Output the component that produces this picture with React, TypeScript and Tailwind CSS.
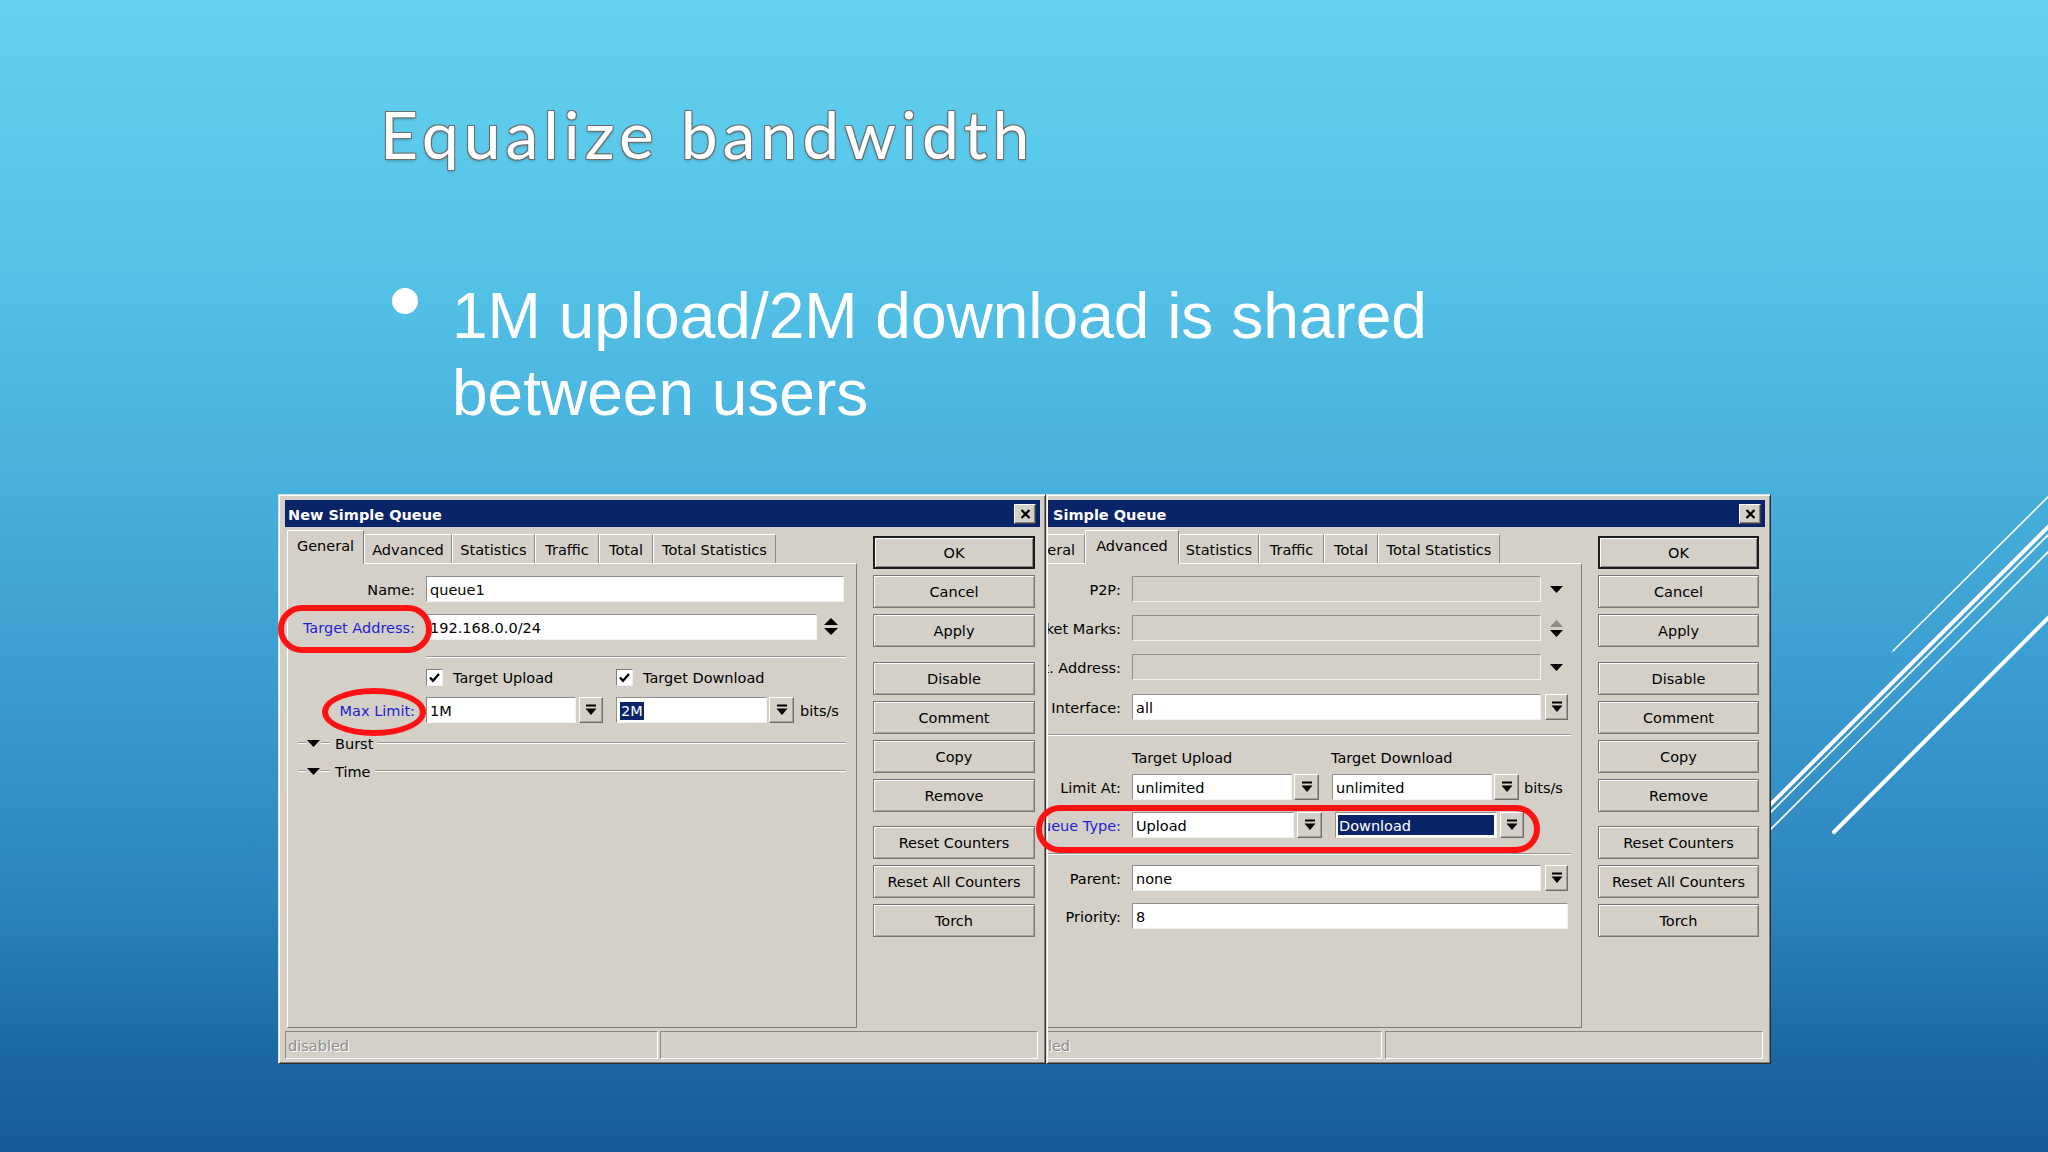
import React from 'react';

const ui = "font-['DejaVu_Sans',sans-serif] text-[14.5px] leading-none text-black";
const etched = 'h-0 border-t border-t-[#9a9894] border-b border-b-white';

function DropGlyph() {
  return (
    <svg width="12" height="13" viewBox="0 0 12 13">
      <rect x="1" y="0.5" width="10" height="2" fill="#000" />
      <path d="M0.5 4.5h11L6 11z" fill="#000" />
    </svg>
  );
}

function DropBtn({ className = '' }: { className?: string }) {
  return (
    <div
      className={`h-[26px] shrink-0 flex items-center justify-center bg-[#d4d0c8] border border-t-white border-l-white border-b-[#6c6c6c] border-r-[#6c6c6c] shadow-[inset_-1px_-1px_0_#a6a39d] ${className}`}
    >
      <DropGlyph />
    </div>
  );
}

function Field({ className = '', grey = false, children }: { className?: string; grey?: boolean; children?: React.ReactNode }) {
  return (
    <div
      className={`h-[26px] shrink-0 flex items-center pl-[3px] pt-[2px] overflow-hidden whitespace-nowrap border border-t-[#8e8e8e] border-l-[#8e8e8e] border-b-[#f4f3f0] border-r-[#f4f3f0] ${grey ? 'bg-[#d4d0c8]' : 'bg-white'} ${className}`}
    >
      {children}
    </div>
  );
}

function SelField({ className = '', children }: { className?: string; children: React.ReactNode }) {
  return (
    <div
      className={`h-[26px] shrink-0 flex p-[2px] bg-white border border-t-[#8e8e8e] border-l-[#8e8e8e] border-b-[#f4f3f0] border-r-[#f4f3f0] ${className}`}
    >
      <div className="flex-1 flex items-center pl-[1px] pt-[2px] bg-[#0a246a] text-white">{children}</div>
    </div>
  );
}

function Arrow({ up = false, color = '#000' }: { up?: boolean; color?: string }) {
  return (
    <svg width="13" height="7" viewBox="0 0 13 7">
      <path d={up ? 'M0 7h13L6.5 0z' : 'M0 0h13L6.5 7z'} fill={color} />
    </svg>
  );
}

function Check() {
  return (
    <div className="w-[17px] h-[17px] shrink-0 bg-white border border-t-[#808080] border-l-[#808080] border-b-[#eeeeee] border-r-[#eeeeee] flex items-center justify-center">
      <svg width="11" height="10" viewBox="0 0 11 10">
        <path d="M1 4.5l3 3.2L10 1" fill="none" stroke="#000" strokeWidth="2.3" />
      </svg>
    </div>
  );
}

function Row({
  label,
  blue = false,
  lw,
  mt,
  children,
}: {
  label: string;
  blue?: boolean;
  lw: string;
  mt: string;
  children: React.ReactNode;
}) {
  return (
    <div className={`flex items-center h-[26px] ${mt}`}>
      <div className={`${lw} shrink-0 flex justify-end whitespace-nowrap pt-[2px] ${blue ? 'text-[#1e1ed6]' : ''}`}>
        <span className="shrink-0">{label}</span>
      </div>
      <div className="w-[11px] shrink-0" />
      {children}
    </div>
  );
}

function Group({ label, mt }: { label: string; mt: string }) {
  return (
    <div className={`flex items-center h-[16px] ml-[10px] mr-[10px] ${mt}`}>
      <div className={`w-[8px] ${etched}`} />
      <div className="ml-[1px]">
        <Arrow />
      </div>
      <div className={`w-[9px] ml-[1px] ${etched}`} />
      <span className="ml-[5px] pt-[2px]">{label}</span>
      <div className={`flex-1 ml-[4px] ${etched}`} />
    </div>
  );
}

function Btn({ label, def = false, mt = '' }: { label: string; def?: boolean; mt?: string }) {
  return (
    <div
      className={`h-[33px] shrink-0 flex items-center justify-center pt-[2px] bg-[#d4d0c8] ${mt} ${
        def
          ? 'border-2 border-[#1c1c1c] shadow-[inset_1px_1px_0_#ffffff,inset_-1px_-1px_0_#8a8a8a]'
          : 'border border-[#767676] shadow-[inset_1px_1px_0_#ffffff,inset_-1px_-1px_0_#a5a29c]'
      }`}
    >
      {label}
    </div>
  );
}

function Buttons({ className }: { className: string }) {
  return (
    <div className={`flex flex-col gap-[6px] pt-[9px] ${className}`}>
      <Btn label="OK" def />
      <Btn label="Cancel" />
      <Btn label="Apply" />
      <Btn label="Disable" mt="mt-[9px]" />
      <Btn label="Comment" />
      <Btn label="Copy" />
      <Btn label="Remove" />
      <Btn label="Reset Counters" mt="mt-[8px]" />
      <Btn label="Reset All Counters" />
      <Btn label="Torch" />
    </div>
  );
}

function TitleBar({ title, pl }: { title: string; pl: string }) {
  return (
    <div className={`h-[27px] shrink-0 bg-[#0a246a] flex items-center justify-between pr-[4px] ${pl}`}>
      <span className="pt-[3px] font-['DejaVu_Sans',sans-serif] font-bold text-[14.5px] leading-none text-white">{title}</span>
      <div className="w-[22px] h-[20px] bg-[#d4d0c8] flex items-center justify-center border border-t-white border-l-white border-b-[#404040] border-r-[#404040] shadow-[inset_-1px_-1px_0_#808080]">
        <svg width="11" height="10" viewBox="0 0 11 10">
          <path d="M1.5 1l8 8M9.5 1l-8 8" stroke="#000" strokeWidth="2.3" />
        </svg>
      </div>
    </div>
  );
}

type TabDef = { label: string; w: string; active?: boolean };

function Tabs({ tabs }: { tabs: TabDef[] }) {
  return (
    <div className="flex items-end h-[33px]">
      {tabs.map((t) =>
        t.active ? (
          <div
            key={t.label}
            className={`${t.w} shrink-0 h-[34px] -mb-px relative z-10 bg-[#d4d0c8] border-t border-l border-white border-r border-r-[#7a7a7a] flex justify-center pt-[8px] whitespace-nowrap`}
          >
            {t.label}
          </div>
        ) : (
          <div
            key={t.label}
            className={`${t.w} shrink-0 h-[29px] bg-[#d4d0c8] border-t border-l border-white border-r border-r-[#8a8a8a] flex justify-center pt-[8px] whitespace-nowrap`}
          >
            {t.label}
          </div>
        )
      )}
    </div>
  );
}

function Panel({ children }: { children: React.ReactNode }) {
  return (
    <div className="h-[465px] flex flex-col border border-t-white border-l-white border-r-[#7c7c7c] border-b-[#7c7c7c]">
      {children}
    </div>
  );
}

function StatusCell({ className, children }: { className: string; children?: React.ReactNode }) {
  return (
    <div
      className={`h-[28px] shrink-0 flex items-center pl-[2px] pt-[2px] whitespace-nowrap text-[#8c8c8c] [text-shadow:1px_1px_0_#ffffff] border border-t-[#8a8a8a] border-l-[#8a8a8a] border-b-white border-r-white ${className}`}
    >
      {children}
    </div>
  );
}

const frame =
  'relative shrink-0 h-[570px] bg-[#d4d0c8] border border-t-[#e2dfd8] border-l-[#e2dfd8] border-r-[#2c2c2c] border-b-[#2c2c2c] shadow-[inset_1px_1px_0_#ffffff,inset_-1px_-1px_0_#808080] pt-[5px] pb-[4px] flex flex-col';

function LeftDialog() {
  return (
    <div className={`${frame} w-[768px] pl-[6px] pr-[5px] ${ui}`}>
      <TitleBar title="New Simple Queue" pl="pl-[3px]" />
      <div className="flex">
        <div className="ml-[2px] w-[570px] shrink-0 flex flex-col pt-[3px]">
          <Tabs
            tabs={[
              { label: 'General', w: 'w-[77px]', active: true },
              { label: 'Advanced', w: 'w-[88px]' },
              { label: 'Statistics', w: 'w-[83px]' },
              { label: 'Traffic', w: 'w-[64px]' },
              { label: 'Total', w: 'w-[54px]' },
              { label: 'Total Statistics', w: 'w-[123px]' },
            ]}
          />
          <Panel>
            <Row label="Name:" lw="w-[127px]" mt="mt-[12px]">
              <Field className="w-[418px]">queue1</Field>
            </Row>
            <Row label="Target Address:" blue lw="w-[127px]" mt="mt-[12px]">
              <Field className="w-[391px]">192.168.0.0/24</Field>
              <svg className="ml-[7px]" width="14" height="18" viewBox="0 0 14 18">
                <path d="M7 0l7 7H0z" fill="#000" />
                <path d="M0 10h14l-7 7z" fill="#000" />
              </svg>
            </Row>
            <div className={`mt-[16px] ml-[138px] mr-[10px] ${etched}`} />
            <div className="flex items-center h-[19px] mt-[10px] pl-[138px]">
              <Check />
              <span className="ml-[10px] w-[163px] shrink-0 pt-[2px]">Target Upload</span>
              <Check />
              <span className="ml-[10px] pt-[2px]">Target Download</span>
            </div>
            <Row label="Max Limit:" blue lw="w-[127px]" mt="mt-[10px]">
              <Field className="w-[150px]">1M</Field>
              <DropBtn className="w-[24px] ml-[3px]" />
              <Field className="w-[151px] ml-[13px] pl-[2px]">
                <span className="bg-[#0a246a] text-white px-[1px] py-[2px]">2M</span>
              </Field>
              <DropBtn className="w-[25px] ml-[2px]" />
              <span className="ml-[6px] pt-[2px]">bits/s</span>
            </Row>
            <Group label="Burst" mt="mt-[12px]" />
            <Group label="Time" mt="mt-[12px]" />
          </Panel>
        </div>
        <Buttons className="ml-[16px] w-[162px] shrink-0" />
      </div>
      <div className="flex gap-[2px] mt-[3px]">
        <StatusCell className="w-[373px]">disabled</StatusCell>
        <StatusCell className="w-[378px]" />
      </div>
      <div className="absolute left-[-1px] top-[110px] w-[154px] h-[48px] border-[6px] border-[#ff1212] rounded-[24px]" />
      <div className="absolute left-[43px] top-[193px] w-[104px] h-[48px] border-[6px] border-[#ff1212] rounded-[50%]" />
    </div>
  );
}

function RightDialog() {
  const lw = 'w-[112px]';
  return (
    <div className={`${frame} w-[725px] pl-[1px] pr-[5px] ${ui}`}>
      <TitleBar title="Simple Queue" pl="pl-[5px]" />
      <div className="overflow-hidden">
        <div className="ml-[-42px]">
          <div className="flex">
            <div className="ml-[2px] w-[574px] shrink-0 flex flex-col pt-[3px]">
              <Tabs
                tabs={[
                  { label: 'General', w: 'w-[77px]' },
                  { label: 'Advanced', w: 'w-[94px]', active: true },
                  { label: 'Statistics', w: 'w-[80px]' },
                  { label: 'Traffic', w: 'w-[65px]' },
                  { label: 'Total', w: 'w-[54px]' },
                  { label: 'Total Statistics', w: 'w-[122px]' },
                ]}
              />
              <Panel>
                <Row label="P2P:" lw={lw} mt="mt-[12px]">
                  <Field grey className="w-[409px]" />
                  <div className="ml-[9px]">
                    <Arrow />
                  </div>
                </Row>
                <Row label="Packet Marks:" lw={lw} mt="mt-[13px]">
                  <Field grey className="w-[409px]" />
                  <div className="ml-[9px] flex flex-col gap-[3px]">
                    <Arrow up color="#8c8a86" />
                    <Arrow />
                  </div>
                </Row>
                <Row label="Dst. Address:" lw={lw} mt="mt-[13px]">
                  <Field grey className="w-[409px]" />
                  <div className="ml-[9px]">
                    <Arrow />
                  </div>
                </Row>
                <Row label="Interface:" lw={lw} mt="mt-[14px]">
                  <Field className="w-[409px]">all</Field>
                  <DropBtn className="w-[23px] ml-[4px]" />
                </Row>
                <div className={`mt-[14px] mr-[10px] ${etched}`} />
                <div className="flex items-center h-[18px] mt-[12px] pl-[123px] pt-[2px]">
                  <span className="w-[199px] shrink-0">Target Upload</span>
                  <span>Target Download</span>
                </div>
                <Row label="Limit At:" lw={lw} mt="mt-[8px]">
                  <Field className="w-[160px]">unlimited</Field>
                  <DropBtn className="w-[25px] ml-[2px]" />
                  <Field className="w-[160px] ml-[13px]">unlimited</Field>
                  <DropBtn className="w-[25px] ml-[2px]" />
                  <span className="ml-[5px] pt-[2px]">bits/s</span>
                </Row>
                <Row label="Queue Type:" blue lw={lw} mt="mt-[12px]">
                  <Field className="w-[162px]">Upload</Field>
                  <DropBtn className="w-[25px] ml-[3px]" />
                  <SelField className="w-[162px] ml-[13px]">Download</SelField>
                  <DropBtn className="w-[24px] ml-[3px]" />
                </Row>
                <div className={`mt-[15px] mr-[10px] ${etched}`} />
                <Row label="Parent:" lw={lw} mt="mt-[10px]">
                  <Field className="w-[409px]">none</Field>
                  <DropBtn className="w-[23px] ml-[4px]" />
                </Row>
                <Row label="Priority:" lw={lw} mt="mt-[12px]">
                  <Field className="w-[436px]">8</Field>
                </Row>
              </Panel>
            </div>
            <Buttons className="ml-[16px] w-[161px] shrink-0" />
          </div>
          <div className="flex gap-[3px] mt-[3px]">
            <StatusCell className="w-[376px]">disabled</StatusCell>
            <StatusCell className="w-[378px]" />
          </div>
        </div>
      </div>
      <div className="absolute left-[-11px] top-[310px] w-[504px] h-[48px] border-[6px] border-[#ff1212] rounded-[26px]" />
    </div>
  );
}

function Decor() {
  return (
    <svg className="absolute inset-0 pointer-events-none" width="2048" height="1152" viewBox="0 0 2048 1152">
      <g stroke="#ffffff" strokeLinecap="round">
        <line x1="1893" y1="651" x2="2060" y2="485" strokeWidth="1.6" />
        <line x1="1700" y1="875" x2="2060" y2="515" strokeWidth="4" />
        <line x1="1700" y1="883" x2="2060" y2="523" strokeWidth="1.6" />
        <line x1="1700" y1="900" x2="2060" y2="540" strokeWidth="1.6" />
        <line x1="1834" y1="832" x2="2060" y2="606" strokeWidth="4" />
      </g>
    </svg>
  );
}

export default function App() {
  return (
    <div className="relative w-[2048px] h-[1152px] overflow-hidden bg-[linear-gradient(180deg,#63d2ef_0%,#55c3e8_22%,#47b0dc_42%,#3a9bcf_60%,#2c84bd_78%,#1a67a3_92%,#145c99_100%)]">
      <Decor />
      <div className="relative pl-[380px] pt-[101px]">
        <h1 className="font-['Lato',sans-serif] font-normal text-[66px] leading-none tracking-[5px] text-white [text-shadow:1px_1px_0_#6e6e6e,-1px_-1px_0_#6e6e6e,1px_-1px_0_#6e6e6e,-1px_1px_0_#6e6e6e,0_2px_3px_rgba(0,0,0,0.25)]">
          Equalize bandwidth
        </h1>
      </div>
      <div className="relative flex pl-[392px] mt-[111px]">
        <div className="w-[26px] h-[26px] mt-[10px] shrink-0 rounded-full bg-white" />
        <p className="ml-[34px] font-['Liberation_Sans',Arial,sans-serif] text-[64px] leading-[77px] text-white">
          1M upload/2M download is shared
          <br />
          between users
        </p>
      </div>
      <div className="relative flex pl-[278px] mt-[62px]">
        <LeftDialog />
        <RightDialog />
      </div>
    </div>
  );
}
